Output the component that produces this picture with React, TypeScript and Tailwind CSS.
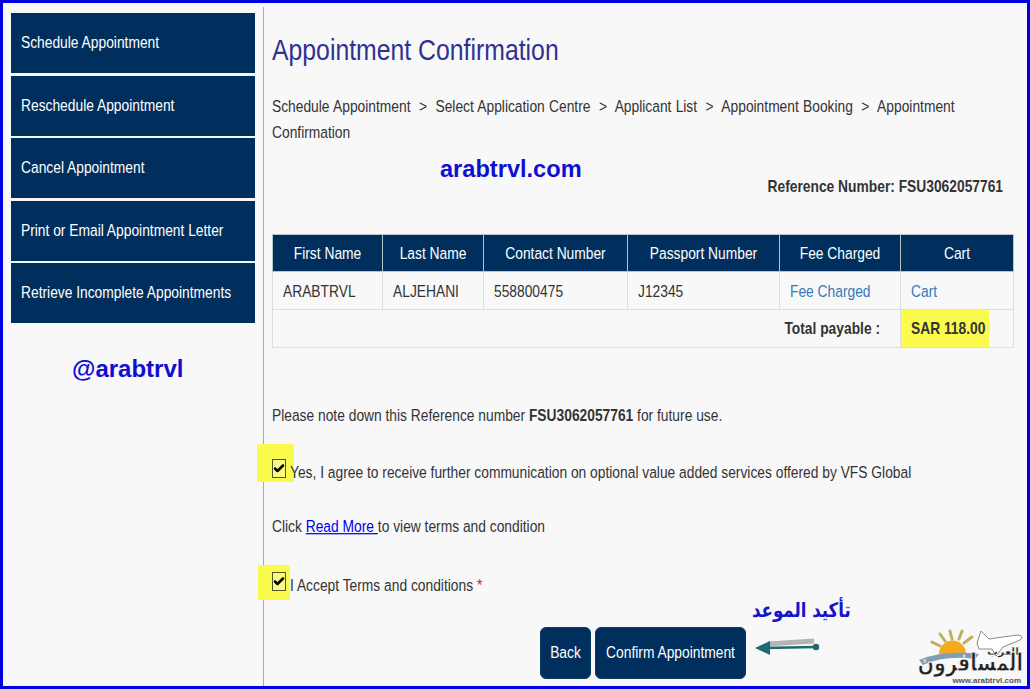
import type { ReactNode } from 'react'
import { Check } from 'lucide-react'

const menu = [
  'Schedule Appointment',
  'Reschedule Appointment',
  'Cancel Appointment',
  'Print or Email Appointment Letter',
  'Retrieve Incomplete Appointments',
]

const heads = ['First Name', 'Last Name', 'Contact Number', 'Passport Number', 'Fee Charged', 'Cart']

// the screenshot is stretched vertically, so text is about 14px drawn taller
function Tall({ children }: { children: ReactNode }) {
  return <span className="inline-block scale-y-[1.22] whitespace-pre">{children}</span>
}

function Tick({ glow }: { glow: string }) {
  return (
    <span className="relative mr-[4px] -mt-[1px] inline-flex h-[19px] w-[14px] shrink-0 self-start">
      <span className={`absolute bg-[#fbfb4e] ${glow}`} />
      <span className="relative flex h-[19px] w-[14px] items-center justify-center border border-[#55552a] bg-[#fbfb80]">
        <Check className="h-[17px] w-[13px] text-black" strokeWidth={5} />
      </span>
    </span>
  )
}

function Logo() {
  return (
    <div className="absolute bottom-0 right-0 h-[58px] w-[110px]">
      <svg viewBox="0 0 110 58" className="absolute inset-0 h-full w-full">
        <g stroke="#b9b45a" strokeWidth="3" strokeLinecap="round">
          <path d="M33 3 L35 11" />
          <path d="M23 6 L28 13" />
          <path d="M45 3 L42 11" />
          <path d="M15 14 L23 18" />
          <path d="M55 9 L47 15" />
        </g>
        <path d="M22 27 A13 13 0 0 1 49 25 Z" fill="#f4a91e" />
        <path d="M2 32 Q26 22 62 26 L58 31 Q28 27 6 37 Z" fill="#7f9fb8" />
        <path d="M60 15 L64 3 L72 11 L100 7 Q108 8 103 12 L86 19 L79 28 L75 21 L62 21 Z" fill="#ffffff" stroke="#8a8a8a" strokeWidth="1" />
      </svg>
      <span className="absolute right-[8px] top-[17px] font-['DejaVu_Sans',sans-serif] text-[11px] leading-[14px] font-bold text-[#1f1f1f] [-webkit-text-stroke:0.3px_white]" dir="rtl">
        العرب
      </span>
      <span className="absolute bottom-[8px] right-[4px] origin-bottom scale-y-[1.3] whitespace-nowrap font-['DejaVu_Sans',sans-serif] text-[19px] leading-[24px] font-bold text-[#222222] [-webkit-text-stroke:0.6px_white]" dir="rtl">
        المسافرون
      </span>
      <span className="absolute bottom-[1px] right-[6px] whitespace-nowrap text-[8px] leading-[9px] font-bold text-[#555555]">www.arabtrvl.com</span>
    </div>
  )
}

export default function App() {
  return (
    <div className="relative flex h-[689px] w-[1030px] overflow-hidden border-[3px] border-[#0000e4] bg-[#f9f8f9] font-['Liberation_Sans',Arial,sans-serif] text-[13.8px] text-[#333333]">
      <aside className="w-[252px] shrink-0 pl-[8px] pt-[10px]">
        <nav className="flex w-[244px] flex-col gap-[2.5px]">
          {menu.map((item) => (
            <a key={item} className="flex h-[60px] items-center bg-[#002f5e] pl-[10px] pt-[1px] text-white">
              <Tall>{item}</Tall>
            </a>
          ))}
        </nav>
        <div className="mt-[32px] pl-[61px] text-[24px] leading-[28px] font-bold text-[#0f0fd2]">@arabtrvl</div>
      </aside>

      <main className="ml-[8px] mt-[4px] w-[757px] border-l border-[#a9a9a9] pl-[8px]">
        <h1 className="mt-[23px] whitespace-nowrap text-[24.8px] leading-[40px] text-[#2f3190]">
          <span className="inline-block scale-y-[1.22]">Appointment Confirmation</span>
        </h1>

        <div className="mt-[24px] w-[700px] leading-[26px] [word-spacing:0.4px]">
          <div>
            <Tall>Schedule Appointment  &gt;  Select Application Centre  &gt;  Applicant List  &gt;  Appointment Booking  &gt;  Appointment</Tall>
          </div>
          <div>
            <Tall>Confirmation</Tall>
          </div>
        </div>

        <div className="mt-[28px] flex w-[731px] justify-end leading-[26px] font-bold">
          <Tall>Reference Number: FSU3062057761</Tall>
        </div>

        <table className="mt-[34px] w-[741px] table-fixed border-collapse">
          <colgroup>
            <col className="w-[110px]" />
            <col className="w-[101px]" />
            <col className="w-[144px]" />
            <col className="w-[152px]" />
            <col className="w-[121px]" />
            <col className="w-[113px]" />
          </colgroup>
          <thead>
            <tr className="h-[37px] bg-[#002f5e] text-white">
              {heads.map((h) => (
                <th key={h} className="border border-[#b8c4cc] pt-[2px] font-normal">
                  <Tall>{h}</Tall>
                </th>
              ))}
            </tr>
          </thead>
          <tbody>
            <tr className="h-[38px]">
              <td className="border border-[#dddddd] pl-[10px] pt-[3px]">
                <Tall>ARABTRVL</Tall>
              </td>
              <td className="border border-[#dddddd] pl-[10px] pt-[3px]">
                <Tall>ALJEHANI</Tall>
              </td>
              <td className="border border-[#dddddd] pl-[10px] pt-[3px]">
                <Tall>558800475</Tall>
              </td>
              <td className="border border-[#dddddd] pl-[10px] pt-[3px]">
                <Tall>J12345</Tall>
              </td>
              <td className="border border-[#dddddd] pl-[10px] pt-[3px] text-[#337ab7]">
                <Tall>Fee Charged</Tall>
              </td>
              <td className="border border-[#dddddd] pl-[10px] pt-[3px] text-[#337ab7]">
                <Tall>Cart</Tall>
              </td>
            </tr>
            <tr className="h-[37px]">
              <td colSpan={5} className="border border-[#dddddd] pr-[20px] pt-[1px] text-right font-bold">
                <Tall>Total payable :</Tall>
              </td>
              <td className="border border-[#dddddd] p-0">
                <span className="flex h-[37px] w-[88px] items-center bg-[#fbfb4e] pl-[10px] pt-[1px] font-bold">
                  <Tall>SAR 118.00</Tall>
                </span>
              </td>
            </tr>
          </tbody>
        </table>

        <p className="mt-[55px] leading-[26px]">
          <Tall>
            Please note down this Reference number <b>FSU3062057761</b> for future use.
          </Tall>
        </p>

        <div className="mt-[31px] flex h-[26px] items-center">
          <Tick glow="-left-[15px] -top-[15px] h-[38px] w-[37px]" />
          <Tall>Yes, I agree to receive further communication on optional value added services offered by VFS Global</Tall>
        </div>

        <p className="mt-[28px] leading-[26px]">
          <Tall>
            Click <a className="text-[#0000ee] underline">Read More </a>to view terms and condition
          </Tall>
        </p>

        <div className="mt-[33px] flex h-[26px] items-center">
          <Tick glow="-left-[14px] -top-[7px] h-[35px] w-[32px]" />
          <Tall>
            I Accept Terms and conditions <span className="text-[#e0103a]">*</span>
          </Tall>
        </div>

        <div className="mt-[28px] flex gap-[4px] pl-[268px] text-white">
          <button className="h-[52px] w-[51px] rounded-[6px] border border-[#0a3a66] bg-[#002f5e]">
            <Tall>Back</Tall>
          </button>
          <button className="h-[52px] w-[151px] rounded-[6px] border border-[#0a3a66] bg-[#002f5e]">
            <Tall>Confirm Appointment</Tall>
          </button>
        </div>
      </main>

      <span className="absolute left-[437px] top-[152px] text-[23.6px] leading-[28px] font-bold text-[#0f0fd2]">arabtrvl.com</span>
      <span className="absolute left-[749px] top-[594px] inline-block scale-y-[1.2] font-['DejaVu_Sans',sans-serif] text-[16.6px] leading-[28px] font-bold text-[#1414c8]" dir="rtl">
        تأكيد الموعد
      </span>
      <svg viewBox="0 0 70 24" className="absolute left-[749px] top-[632px] h-[24px] w-[70px]">
        <path d="M16 9 L62 6" stroke="#b5b5b5" strokeWidth="5" />
        <path d="M12 13 L64 12" stroke="#1c6a70" strokeWidth="2.5" />
        <circle cx="64" cy="12" r="3.2" fill="#1c6a70" />
        <path d="M3 13 L18 6 L18 20 Z" fill="#1c6a70" />
      </svg>
      <Logo />
    </div>
  )
}
